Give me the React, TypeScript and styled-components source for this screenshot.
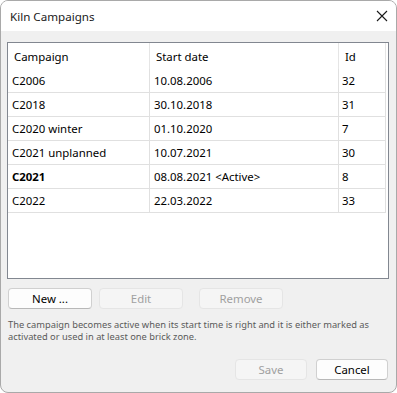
import React from "react";
import styled, { createGlobalStyle } from "styled-components";

const Global = createGlobalStyle`
  html, body { margin: 0; padding: 0; background: #ffffff; }
  * { box-sizing: border-box; }
`;

const Window = styled.div`
  width: 397px;
  height: 393px;
  border: 1px solid #a9a9a9;
  border-radius: 8px;
  overflow: hidden;
  background: #f0f0f0;
  display: flex;
  flex-direction: column;
  font-family: "Noto Sans", sans-serif;
  font-size: 11.4px;
  color: #000;
`;

const TitleBar = styled.div`
  height: 30px;
  flex: none;
  background: #ffffff;
  display: flex;
  align-items: center;
  justify-content: space-between;
  padding: 0 8px 0 9px;
`;

const Title = styled.span`
  font-size: 11.6px;
  color: #1a1a1a;
`;

const Body = styled.div`
  flex: 1;
  display: flex;
  flex-direction: column;
  padding: 11px 7px 0 6px;
`;

const ListBox = styled.div`
  height: 237px;
  border: 1px solid #828790;
  background: #fff;
  flex: none;
`;

const Grid = styled.div`
  display: grid;
  grid-template-columns: 142px 189px 47px;
  width: 378px;
`;

const HeadCell = styled.div`
  height: 26px;
  display: flex;
  align-items: center;
  padding-left: 6px;
  border-right: 1px solid #e5e5e5;
  color: #000;
`;

const Cell = styled.div<{ $bold?: boolean; $pad?: number }>`
  height: 24px;
  display: flex;
  align-items: center;
  padding-left: ${(p) => p.$pad ?? 4}px;
  border-right: 1px solid #e0e0e0;
  border-bottom: 1px solid #e0e0e0;
  font-weight: ${(p) => (p.$bold ? 700 : 400)};
  white-space: nowrap;
`;

const ButtonRow = styled.div`
  display: flex;
  gap: 7px;
  margin: 9px 0 0 1px;
`;

const Btn = styled.button<{ $w: number; $ml?: number }>`
  width: ${(p) => p.$w}px;
  height: 21px;
  margin-left: ${(p) => p.$ml ?? 0}px;
  border-radius: 4px;
  border: 1px solid #d0d0d0;
  border-bottom-color: #b8b8b8;
  background: #fdfdfd;
  font-family: "Noto Sans", sans-serif;
  font-size: 11.4px;
  color: #000;
  padding: 0;
  &:disabled {
    background: #f5f5f5;
    border-color: #e5e5e5;
    color: #a0a0a0;
  }
`;

const Note = styled.p`
  margin: 10px 0 0 1px;
  font-size: 9.3px;
  line-height: 12px;
  color: #5a5a5a;
  width: 372px;
`;

const Footer = styled.div`
  margin-top: auto;
  margin-bottom: 12px;
  display: flex;
  justify-content: flex-end;
  gap: 9px;
  padding-right: 1px;
`;

const rows = [
  { name: "C2006", date: "10.08.2006", id: "32" },
  { name: "C2018", date: "30.10.2018", id: "31" },
  { name: "C2020 winter", date: "01.10.2020", id: "7" },
  { name: "C2021 unplanned", date: "10.07.2021", id: "30" },
  { name: "C2021", date: "08.08.2021 <Active>", id: "8", bold: true },
  { name: "C2022", date: "22.03.2022", id: "33" },
];

const CloseIcon = () => (
  <svg width="12" height="12" viewBox="0 0 12 12">
    <path d="M1 1 L11 11 M11 1 L1 11" stroke="#1a1a1a" strokeWidth="1.1" />
  </svg>
);

export default function App() {
  return (
    <>
      <Global />
      <Window>
        <TitleBar>
          <Title>Kiln Campaigns</Title>
          <CloseIcon />
        </TitleBar>
        <Body>
          <ListBox>
            <Grid>
              <HeadCell>Campaign</HeadCell>
              <HeadCell>Start date</HeadCell>
              <HeadCell>Id</HeadCell>
              {rows.map((r) => (
                <React.Fragment key={r.name + r.id}>
                  <Cell $bold={r.bold}>{r.name}</Cell>
                  <Cell>{r.date}</Cell>
                  <Cell $pad={3}>{r.id}</Cell>
                </React.Fragment>
              ))}
            </Grid>
          </ListBox>
          <ButtonRow>
            <Btn $w={84}>New ...</Btn>
            <Btn $w={84} disabled>Edit</Btn>
            <Btn $w={84} $ml={9} disabled>Remove</Btn>
          </ButtonRow>
          <Note>
            The campaign becomes active when its start time is right and it is either marked as
            activated or used in at least one brick zone.
          </Note>
          <Footer>
            <Btn $w={72} disabled>Save</Btn>
            <Btn $w={72}>Cancel</Btn>
          </Footer>
        </Body>
      </Window>
    </>
  );
}
